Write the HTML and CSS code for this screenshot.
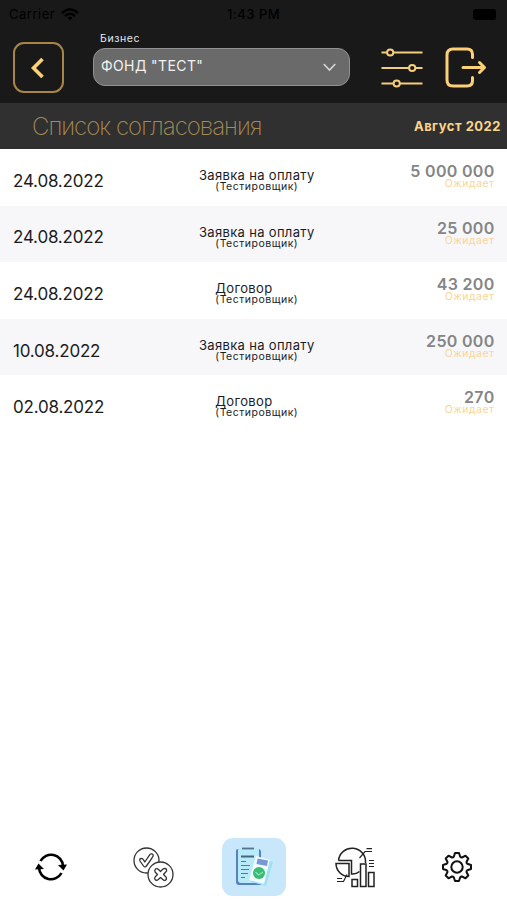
FILE: index.html
```html
<!DOCTYPE html>
<html lang="ru">
<head>
    <meta charset="UTF-8">
    <meta name="viewport" content="width=device-width, initial-scale=1.0">
    <title>Список согласования</title>
    <link rel="stylesheet" href="styles.css">
</head>
<body>
    <header class="top">
        <div class="status-bar">
            <div class="carrier">
                <span>Carrier</span>
                <svg width="18" height="13" viewBox="0 0 18 13" fill="none" stroke="#000" stroke-width="2.4">
                    <path d="M1 5 Q9 -2 17 5"/>
                    <path d="M4 8 Q9 3.6 14 8"/>
                    <path d="M6.5 9.8 Q9 7.8 11.5 9.8 L9 12.5 Z" fill="#000" stroke="none"/>
                </svg>
            </div>
            <div class="clock">1:43 PM</div>
            <div class="battery"><span></span></div>
        </div>

        <div class="toolbar">
            <button type="button" class="back-button" aria-label="Назад">
                <svg width="14" height="22" viewBox="0 0 14 22" fill="none" stroke="#fbd076" stroke-width="3.6">
                    <path d="M11.5 2 L2.5 11 L11.5 20"/>
                </svg>
            </button>
            <div class="business">
                <label class="business-label">Бизнес</label>
                <div class="business-select">
                    <span>ФОНД "ТЕСТ"</span>
                    <svg width="13" height="9" viewBox="0 0 13 9" fill="none" stroke="#d8d8d8" stroke-width="1.6" stroke-linecap="round">
                        <path d="M1.2 1.5 L6.5 7 L11.8 1.5"/>
                    </svg>
                </div>
            </div>
            <svg class="filter-icon" width="42" height="40" viewBox="0 0 42 40" fill="none" stroke="#f5ce7c" stroke-width="2">
                <path d="M0.5 4.5 H6 M12.5 4.5 H41.5 M0.5 20 H28 M34.5 20 H41.5 M0.5 35.5 H12.5 M19 35.5 H41.5"/>
                <circle cx="9.2" cy="4.5" r="3.1"/>
                <circle cx="31.2" cy="20" r="3.1"/>
                <circle cx="15.7" cy="35.5" r="3.1"/>
            </svg>
            <svg class="logout-icon" width="42" height="42" viewBox="0 0 42 42" fill="none" stroke="#fbd076" stroke-width="3" stroke-linecap="round" stroke-linejoin="round">
                <path d="M27.5 10.5 V7.5 Q27.5 2 22 2 H8 Q2 2 2 8 V33 Q2 39 8 39 H22 Q27.5 39 27.5 33.5 V30.500"/>
                <path d="M18 20.500 H39 M34.500 15.500 L39.500 20.500 L34.500 25.500"/>
            </svg>
        </div>

        <div class="title-bar">
            <h1>Список согласования</h1>
            <span class="month">Август 2022</span>
        </div>
    </header>

    <main class="list">
        <div class="row">
            <div class="date">24.08.2022</div>
            <div class="doc">
                <div class="doc-type">Заявка на оплату</div>
                <div class="doc-author">(Тестировщик)</div>
            </div>
            <div class="sum">
                <div class="amount">5 000 000</div>
                <div class="state">Ожидает</div>
            </div>
        </div>
        <div class="row">
            <div class="date">24.08.2022</div>
            <div class="doc">
                <div class="doc-type">Заявка на оплату</div>
                <div class="doc-author">(Тестировщик)</div>
            </div>
            <div class="sum">
                <div class="amount">25 000</div>
                <div class="state">Ожидает</div>
            </div>
        </div>
        <div class="row">
            <div class="date">24.08.2022</div>
            <div class="doc">
                <div class="doc-type">Договор</div>
                <div class="doc-author">(Тестировщик)</div>
            </div>
            <div class="sum">
                <div class="amount">43 200</div>
                <div class="state">Ожидает</div>
            </div>
        </div>
        <div class="row">
            <div class="date">10.08.2022</div>
            <div class="doc">
                <div class="doc-type">Заявка на оплату</div>
                <div class="doc-author">(Тестировщик)</div>
            </div>
            <div class="sum">
                <div class="amount">250 000</div>
                <div class="state">Ожидает</div>
            </div>
        </div>
        <div class="row">
            <div class="date">02.08.2022</div>
            <div class="doc">
                <div class="doc-type">Договор</div>
                <div class="doc-author">(Тестировщик)</div>
            </div>
            <div class="sum">
                <div class="amount">270</div>
                <div class="state">Ожидает</div>
            </div>
        </div>
    </main>

    <nav class="tabs">
        <!-- refresh -->
        <a class="tab">
            <svg width="32" height="28" viewBox="0 0 32 28" fill="none" stroke="#000" stroke-width="2.6">
                <path d="M5.500 8 A12 12 0 0 1 28 13"/>
                <path d="M26.500 20 A12 12 0 0 1 4 15"/>
                <path d="M23 12 L32 11.500 L28.500 17.500 Z M9 16 L0 16.500 L3.500 10.500 Z" fill="#000" stroke="none"/>
            </svg>
        </a>
        <!-- approve / reject -->
        <a class="tab">
            <svg width="42" height="42" viewBox="0 0 42 42" fill="none" stroke="#333" stroke-width="1.3" stroke-linejoin="round">
                <circle cx="14.5" cy="14.5" r="12.5"/>
                <path d="M8 15 Q7 12.5 9.5 12.3 Q11 12.3 12.8 16 L18 8.3 Q20 7 21.3 9 Q21.5 10.5 14 20.5 Q12.5 21.500 11.500 20 Z"/>
                <circle cx="28.5" cy="28.5" r="12.5" fill="#fff"/>
                <path d="M28.5 25.5 L31 23 Q33.5 21.8 34.5 23.5 Q35.2 25 33.5 26.3 L31.5 28.5 L34 31 Q35.2 33 33.5 34.2 Q32 35 30.5 33.3 L28.5 31.5 L26.3 33.5 Q24.5 35 23 33.5 Q22 32 23.5 30.5 L25.5 28.5 L23.3 26.3 Q22 24.5 23.5 23 Q25 22 26.5 23.5 Z"/>
            </svg>
        </a>
        <!-- documents -->
        <a class="tab">
            <span class="tab-active">
                <svg width="64" height="58" viewBox="0 0 64 58">
                    <path d="M16 11 H36 Q39 11 39 14 V47 H17 Q14 47 14 44 V13 Q14 11 16 11 Z" fill="#5681c3"/>
                    <path d="M17 10 H37 V45 H19 Q16 45 16 42 V12 Z" fill="#b9eafa"/>
                    <path d="M20 10.5 H32" stroke="#55738f" stroke-width="1.8"/>
                    <path d="M19 18.5 H32" stroke="#46657c" stroke-width="2"/>
                    <path d="M19 23.5 H24 M19 27.5 H28 M19 31.5 H27 M19 35.5 H26 M19 39.5 H23" stroke="#527c91" stroke-width="1.2"/>
                    <path d="M39 20 L51 24 L44 48 L29 44 Z" fill="#9de1f2"/>
                    <path d="M34 18 L48 22 L42 46 L27 42 Z" fill="#f2fbff"/>
                    <path d="M35.500 20.500 L46 22.500 L45 28 L34.500 26 Z" fill="#7898d8"/>
                    <circle cx="37" cy="35" r="6" fill="#38bd72"/>
                    <path d="M33.5 34 L36.5 37 L41 34" fill="none" stroke="#8ee5b5" stroke-width="1.2"/>
                </svg>
            </span>
        </a>
        <!-- analytics -->
        <a class="tab">
            <svg width="42" height="42" viewBox="0 0 42 42" fill="none" stroke="#222" stroke-width="1.5">
                <path d="M4.500 14.500 A13.500 13.500 0 0 1 31.500 17 M4.500 14.500 H17.500 V28 Q22 28.500 25.500 25.500"/>
                <path d="M2 17.500 H15 V30.500 A13 13 0 0 1 2 17.500 Z"/>
                <rect x="26.500" y="18" width="5.500" height="22.500" fill="#fff"/>
                <rect x="18" y="33.500" width="5.500" height="7"/>
                <rect x="34.500" y="26.500" width="5.500" height="14"/>
                <path d="M25.500 12 L31 5.500 H38 M32.500 2.700 H38" stroke-width="1.2"/>
                <path d="M35 14.500 H40 M35 17.500 H40 M35 20.500 H40" stroke-width="1.2"/>
                <path d="M3 32.500 H8 M3 35.500 H9.500 L13 28.500" stroke-width="1.2"/>
            </svg>
        </a>
        <!-- settings -->
        <a class="tab">
            <svg width="32" height="32" viewBox="-16 -16 32 32" fill="none" stroke="#111" stroke-width="2" stroke-linejoin="round">
                <path d="M-3.2 -10.3 L-2 -14 H2 L3.2 -10.3 Q4 -9.3 5 -9.5 L8.5 -11.3 L11.3 -8.5 L9.5 -5 Q9.3 -4 10.3 -3.2 L14 -2 V2 L10.3 3.2 Q9.3 4 9.5 5 L11.3 8.5 L8.5 11.3 L5 9.5 Q4 9.3 3.2 10.3 L2 14 H-2 L-3.2 10.3 Q-4 9.3 -5 9.5 L-8.5 11.3 L-11.3 8.5 L-9.5 5 Q-9.3 4 -10.3 3.2 L-14 2 V-2 L-10.3 -3.2 Q-9.3 -4 -9.5 -5 L-11.3 -8.5 L-8.5 -11.3 L-5 -9.5 Q-4 -9.3 -3.2 -10.3 Z"/>
                <circle r="5.7"/>
            </svg>
        </a>
    </nav>
</body>
</html>
```
FILE: styles.css
```css
* {
    box-sizing: border-box;
}
body {
    margin: 0;
    height: 100vh;
    display: flex;
    flex-direction: column;
    font-family: Inter, "Liberation Sans", sans-serif;
    color: #1c1c1e;
    background: #fff;
}
svg {
    display: block;
    flex-shrink: 0;
}
.top {
    background: #191919;
}
.status-bar {
    display: grid;
    grid-template-columns: 1fr auto 1fr;
    align-items: center;
    height: 28px;
    padding: 0 11px 0 9px;
    color: #000;
    font-size: 13px;
    letter-spacing: 0.5px;
}
.carrier {
    display: flex;
    align-items: center;
    gap: 6px;
}
.clock {
    padding-left: 2px;
    font-weight: 500;
}
.battery span {
    display: block;
    width: 23px;
    height: 11px;
    margin-left: auto;
    border-radius: 3px;
    background: #000;
}
.toolbar {
    display: flex;
    align-items: flex-start;
    height: 75px;
    padding-left: 13px;
}
.back-button {
    display: flex;
    align-items: center;
    justify-content: center;
    width: 51px;
    height: 51px;
    margin-top: 14px;
    padding: 0 1px 0 0;
    border: 2px solid #a98545;
    border-radius: 11px;
    background: none;
}
.business {
    width: 257px;
    margin: 4px 0 0 29px;
}
.business-label {
    display: block;
    height: 16px;
    padding-left: 7px;
    line-height: 14px;
    font-size: 10.5px;
    letter-spacing: 0.6px;
    color: #e8e8e8;
}
.business-select {
    display: flex;
    align-items: center;
    justify-content: space-between;
    height: 38px;
    padding: 0 13px 3px 7px;
    border: 1px solid #929292;
    border-radius: 12px;
    background: #6b6a6b;
    color: #f2f2f2;
    font-size: 14px;
    letter-spacing: 0.4px;
}
.business-select svg {
    margin-top: 3px;
}
.filter-icon {
    margin: 20px 0 0 31px;
}
.logout-icon {
    margin: 19px 0 0 22px;
}
.title-bar {
    display: flex;
    align-items: center;
    justify-content: space-between;
    height: 46px;
    padding: 0 6px 0 32px;
    background: #303030;
}
.title-bar h1 {
    margin: 0;
    font-size: 24px;
    font-weight: 200;
    letter-spacing: -1px;
    color: #a58b55;
}
.month {
    font-size: 13px;
    font-weight: 700;
    letter-spacing: 0.5px;
    color: #fbd68a;
}
.row {
    display: grid;
    grid-template-columns: 1fr auto 1fr;
    height: 56.6px;
    padding: 0 12.5px 0 13px;
}
.row:nth-child(even) {
    background: #f7f7fa;
}
.date {
    align-self: center;
    padding-top: 7px;
    font-size: 17px;
    letter-spacing: -0.2px;
}
.doc {
    padding: 19px 0 0 6px;
}
.doc-type {
    line-height: 15px;
    font-size: 13px;
    letter-spacing: 0.33px;
}
.doc-author {
    line-height: 8px;
    font-size: 10.5px;
    letter-spacing: 0.5px;
    text-align: center;
}
.sum {
    padding-top: 13px;
    text-align: right;
}
.amount {
    line-height: 18px;
    font-size: 16px;
    font-weight: 600;
    letter-spacing: 0.3px;
    color: #858585;
}
.state {
    line-height: 8px;
    font-size: 10.5px;
    letter-spacing: 0.5px;
    color: #fcd595;
}
.tabs {
    display: grid;
    grid-template-columns: repeat(5, 1fr);
    align-items: center;
    height: 66px;
    margin-top: auto;
}
.tab {
    display: flex;
    justify-content: center;
    padding-left: 1px;
}
.tab-active {
    border-radius: 11px;
    background: #c9e7fb;
}
```
